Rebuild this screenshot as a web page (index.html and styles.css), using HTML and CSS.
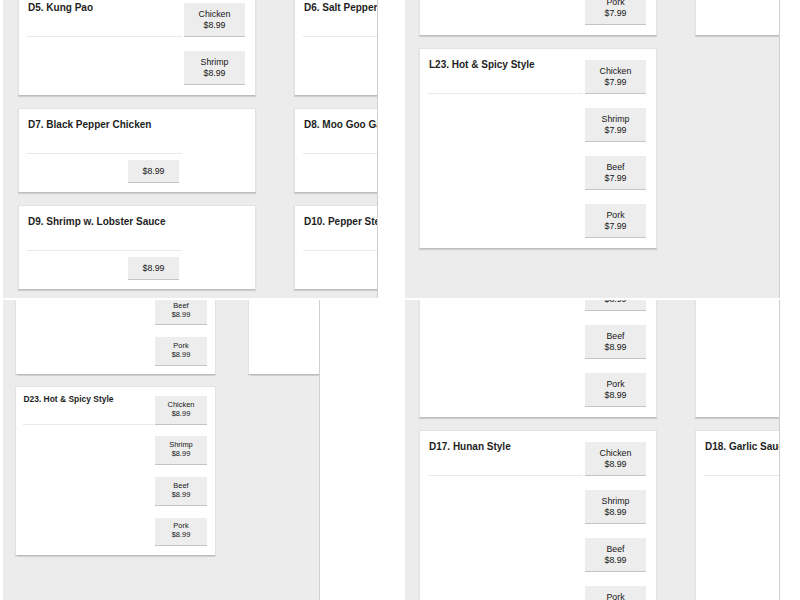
FILE: index.html
```html
<!DOCTYPE html>
<html lang="en">
<head>
    <meta charset="UTF-8">
    <meta name="viewport" content="width=device-width, initial-scale=1.0">
    <title>Menu - Dinner Combos</title>
    <link rel="stylesheet" href="styles.css">
</head>
<body>
    <div class="shots">

        <!-- Shot 1: dinner D5 - D10 -->
        <div class="shot shot-left">
            <div class="panel panel-top">
                <div class="menu scroll-d5">
                    <div class="card">
                        <div class="card-main"><div class="card-title">D5. Kung Pao</div></div>
                        <div class="card-options">
                            <div class="option">Chicken<br>$8.99</div>
                            <div class="option">Shrimp<br>$8.99</div>
                        </div>
                    </div>
                    <div class="card">
                        <div class="card-main"><div class="card-title">D6. Salt Pepper Shrimp</div></div>
                        <div class="card-options">
                            <div class="option">Shrimp<br>$8.99</div>
                            <div class="option">Squid<br>$8.99</div>
                        </div>
                    </div>
                    <div class="card">
                        <div class="card-main">
                            <div class="card-title">D7. Black Pepper Chicken</div>
                            <div class="price-single">$8.99</div>
                        </div>
                        <div class="card-options"></div>
                    </div>
                    <div class="card">
                        <div class="card-main">
                            <div class="card-title">D8. Moo Goo Gai Pan</div>
                            <div class="price-single">$8.99</div>
                        </div>
                        <div class="card-options"></div>
                    </div>
                    <div class="card">
                        <div class="card-main">
                            <div class="card-title">D9. Shrimp w. Lobster Sauce</div>
                            <div class="price-single">$8.99</div>
                        </div>
                        <div class="card-options"></div>
                    </div>
                    <div class="card">
                        <div class="card-main">
                            <div class="card-title">D10. Pepper Steak</div>
                            <div class="price-single">$8.99</div>
                        </div>
                        <div class="card-options"></div>
                    </div>
                </div>
            </div>
        </div>

        <!-- Shot 2: lunch L21 - L23 -->
        <div class="shot shot-right">
            <div class="panel panel-top">
                <div class="menu scroll-l21">
                    <div class="card">
                        <div class="card-main"><div class="card-title">L21. Garlic Sauce</div></div>
                        <div class="card-options">
                            <div class="option">Chicken<br>$7.99</div>
                            <div class="option">Shrimp<br>$7.99</div>
                            <div class="option">Beef<br>$7.99</div>
                            <div class="option">Pork<br>$7.99</div>
                        </div>
                    </div>
                    <div class="card">
                        <div class="card-main"><div class="card-title">L22. Hunan Style</div></div>
                        <div class="card-options">
                            <div class="option">Chicken<br>$7.99</div>
                            <div class="option">Shrimp<br>$7.99</div>
                            <div class="option">Beef<br>$7.99</div>
                            <div class="option">Pork<br>$7.99</div>
                        </div>
                    </div>
                    <div class="card">
                        <div class="card-main"><div class="card-title">L23. Hot &amp; Spicy Style</div></div>
                        <div class="card-options">
                            <div class="option">Chicken<br>$7.99</div>
                            <div class="option">Shrimp<br>$7.99</div>
                            <div class="option">Beef<br>$7.99</div>
                            <div class="option">Pork<br>$7.99</div>
                        </div>
                    </div>
                </div>
            </div>
        </div>

        <!-- Shot 3: dinner D21 - D23, smaller window -->
        <div class="shot shot-left">
            <div class="panel panel-small">
                <div class="menu menu-small scroll-d21">
                    <div class="card">
                        <div class="card-main"><div class="card-title">D21. Garlic Sauce</div></div>
                        <div class="card-options">
                            <div class="option">Chicken<br>$8.99</div>
                            <div class="option">Shrimp<br>$8.99</div>
                            <div class="option">Beef<br>$8.99</div>
                            <div class="option">Pork<br>$8.99</div>
                        </div>
                    </div>
                    <div class="card">
                        <div class="card-main"><div class="card-title">D22. Kung Pao Style</div></div>
                        <div class="card-options">
                            <div class="option">Chicken<br>$8.99</div>
                            <div class="option">Shrimp<br>$8.99</div>
                            <div class="option">Beef<br>$8.99</div>
                            <div class="option">Pork<br>$8.99</div>
                        </div>
                    </div>
                    <div class="card">
                        <div class="card-main"><div class="card-title">D23. Hot &amp; Spicy Style</div></div>
                        <div class="card-options">
                            <div class="option">Chicken<br>$8.99</div>
                            <div class="option">Shrimp<br>$8.99</div>
                            <div class="option">Beef<br>$8.99</div>
                            <div class="option">Pork<br>$8.99</div>
                        </div>
                    </div>
                </div>
            </div>
        </div>

        <!-- Shot 4: dinner D15 - D18 -->
        <div class="shot shot-right">
            <div class="panel">
                <div class="menu scroll-d15">
                    <div class="card">
                        <div class="card-main"><div class="card-title">D15. Sweet &amp; Sour</div></div>
                        <div class="card-options">
                            <div class="option">Chicken<br>$8.99</div>
                            <div class="option">Shrimp<br>$8.99</div>
                            <div class="option">Beef<br>$8.99</div>
                            <div class="option">Pork<br>$8.99</div>
                        </div>
                    </div>
                    <div class="card">
                        <div class="card-main"><div class="card-title">D16. Mixed Vegetables</div></div>
                        <div class="card-options">
                            <div class="option">Chicken<br>$8.99</div>
                            <div class="option">Shrimp<br>$8.99</div>
                            <div class="option">Beef<br>$8.99</div>
                            <div class="option">Pork<br>$8.99</div>
                        </div>
                    </div>
                    <div class="card">
                        <div class="card-main"><div class="card-title">D17. Hunan Style</div></div>
                        <div class="card-options">
                            <div class="option">Chicken<br>$8.99</div>
                            <div class="option">Shrimp<br>$8.99</div>
                            <div class="option">Beef<br>$8.99</div>
                            <div class="option">Pork<br>$8.99</div>
                        </div>
                    </div>
                    <div class="card">
                        <div class="card-main"><div class="card-title">D18. Garlic Sauce</div></div>
                        <div class="card-options">
                            <div class="option">Chicken<br>$8.99</div>
                            <div class="option">Shrimp<br>$8.99</div>
                            <div class="option">Beef<br>$8.99</div>
                            <div class="option">Pork<br>$8.99</div>
                        </div>
                    </div>
                </div>
            </div>
        </div>

    </div>
</body>
</html>
```

FILE: styles.css
```css
* {
    margin: 0;
    padding: 0;
    box-sizing: border-box;
}

body {
    font-family: "Liberation Sans", Arial, sans-serif;
    background: #ffffff;
    color: #1e1e1e;
    width: 800px;
    height: 600px;
    overflow: hidden;
}

/* Four screenshots in a 2x2 sheet */
.shots {
    display: grid;
    grid-template-columns: 400px 400px;
    grid-template-rows: 300px 300px;
}

.shot-left {
    padding-left: 3px;
}

.shot-right {
    padding-left: 5px;
}

.panel {
    width: 375px;
    height: 300px;
    background: #ececec;
    border-right: 1px solid #cfcfcf;
    overflow: hidden;
}

.panel-top {
    height: 298px;
}

.panel-small {
    width: 317px;
}

/* Menu grid, scrolled by an offset per shot */
.menu {
    display: grid;
    grid-template-columns: 238px 238px;
    column-gap: 38px;
    row-gap: 12px;
    padding-left: 15px;
}

.shot-right .menu {
    padding-left: 14px;
}

.menu-small {
    zoom: 0.845;
}

.shot-left .menu-small {
    padding-left: 14px;
}

.scroll-d5 { margin-top: -9px; }
.scroll-l21 { margin-top: -165px; }
.scroll-d21 { margin-top: -112px; }
.scroll-d15 { margin-top: -83px; }

/* Cards */
.card {
    display: flex;
    gap: 2px;
    align-items: flex-start;
    padding: 9px 10px 9px 8px;
    background: #ffffff;
    border: 1px solid #e2e2e2;
    border-bottom-color: #bdbdbd;
    box-shadow: 0 1px 1px rgba(0, 0, 0, 0.12);
}

.card-main {
    width: 155px;
    flex-shrink: 0;
    display: flex;
    flex-direction: column;
}

.card-title {
    height: 36px;
    border-bottom: 1px solid #e9e9e9;
    padding-left: 1px;
    font-size: 10px;
    font-weight: 700;
    line-height: 13px;
    white-space: nowrap;
}

.card-options {
    width: 61px;
    flex-shrink: 0;
    display: flex;
    flex-direction: column;
    gap: 14px;
    padding: 2px 0 1px;
}

.option,
.price-single {
    display: flex;
    align-items: center;
    justify-content: center;
    text-align: center;
    background: #ededed;
    border-bottom: 1px solid #c4c4c4;
    font-size: 8.8px;
    line-height: 10.5px;
    color: #151515;
}

.option {
    height: 34px;
}

.price-single {
    width: 51px;
    height: 23px;
    margin: 6px 3px 0 auto;
}
```
